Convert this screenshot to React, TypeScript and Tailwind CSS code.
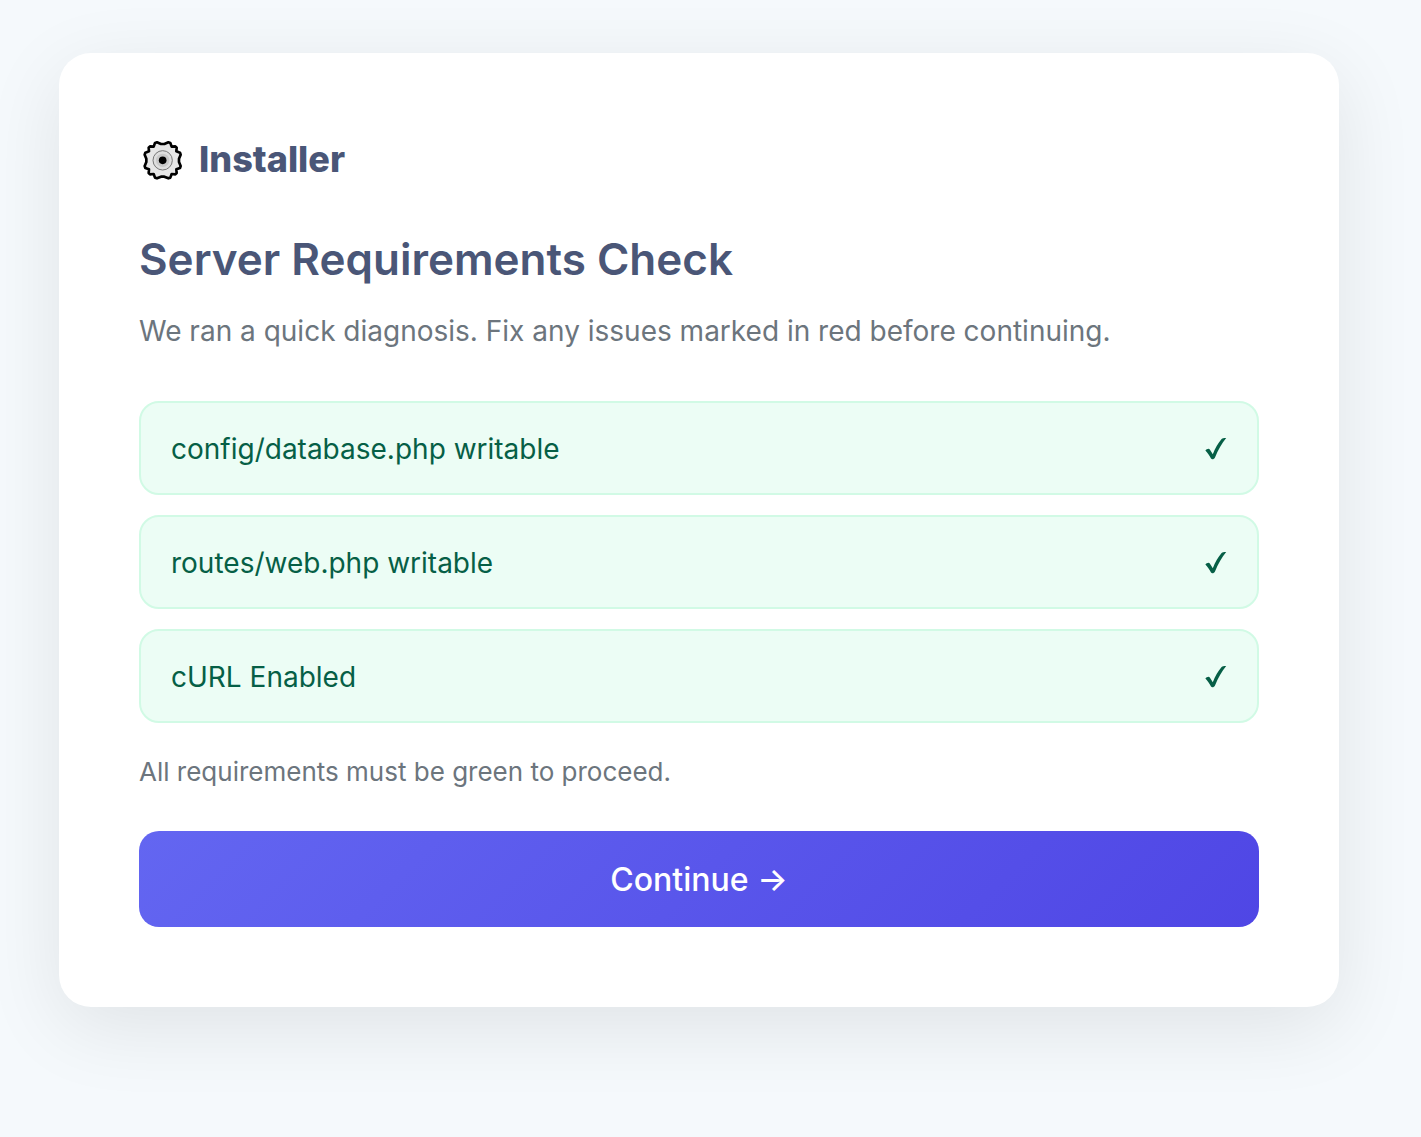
import React from 'react';

interface Requirement {
  label: string;
  passed: boolean;
}

const requirements: Requirement[] = [
  { label: 'config/database.php writable', passed: true },
  { label: 'routes/web.php writable', passed: true },
  { label: 'cURL Enabled', passed: true },
];

const GearIcon: React.FC = () => (
  <svg viewBox="-71 -73 144 144" className="w-12 h-12 shrink-0" aria-hidden="true">
    <path
      d="M-17-54 -5-49 5-49 17-54 23-52 27-41 38-42 42-38 41-27 52-23 54-17 49-5 49 5 54 17 52 23 41 27 42 38 38 42 27 41 23 52 17 54 5 49 -5 49 -17 54 -23 52 -27 41 -38 42 -42 38 -41 27 -52 23 -54 17 -49 5 -49-5 -54-17 -52-23 -41-27 -42-38 -38-42 -27-41 -23-52Z"
      fill="#e6e6e6"
      stroke="#000"
      strokeWidth="8"
      strokeLinejoin="round"
    />
    <circle r="29" fill="#dedede" stroke="#777" strokeWidth="3" />
    <circle r="20" fill="#c8c8c8" />
    <circle r="11.5" fill="#000" />
  </svg>
);

const CheckIcon: React.FC = () => (
  <svg viewBox="0 0 24 28" className="w-6 h-7 shrink-0" role="img" aria-label="Passed">
    <path d="M2.4 15.6C3.4 14.2 5.8 13.2 6.8 14.4L9.8 19.2C12.2 13.4 15.2 8 18.6 4.1C19.6 3 21.6 2.9 23.2 3C18.8 8.4 15 15.2 12 22.4C11.3 24.1 9 24.7 8 23.6C6.6 21 4.8 18.4 2.4 15.6Z" fill="currentColor" />
  </svg>
);

const RequirementRow: React.FC<{ item: Requirement }> = ({ item }) => (
  <li
    className={`flex items-center justify-between rounded-[20px] border-2 px-[30px] pt-[25px] pb-[23px] text-[28px] leading-[42px] ${
      item.passed ? 'bg-[#ecfdf5] border-[#d1fae5] text-[#065f46]' : 'bg-red-50 border-red-100 text-red-800'
    }`}
  >
    <span>{item.label}</span>
    {item.passed ? <CheckIcon /> : <span>✕</span>}
  </li>
);

export default function App() {
  const ready = requirements.every((r) => r.passed);

  return (
    <div className="min-h-screen bg-[#f5f9fc] pt-[53px] pb-16 pl-[59px] pr-[82px] font-['Inter',sans-serif]">
      <main className="w-full rounded-[32px] bg-white p-20 shadow-[0_20px_80px_rgba(0,0,0,0.09)]">
        <div className="flex items-center gap-3 text-[#4a5677]">
          <GearIcon />
          <span className="pb-0.5 text-[36px] leading-[52px] font-extrabold">Installer</span>
        </div>

        <h1 className="mt-[39px] text-[44px] leading-[66px] font-semibold text-[#4a5677]">Server Requirements Check</h1>
        <p className="mt-[17px] text-[28px] leading-[44px] text-[#6c757d]">
          We ran a quick diagnosis. Fix any issues marked in red before continuing.
        </p>

        <ul className="mt-12 flex flex-col gap-5">
          {requirements.map((item) => (
            <RequirementRow key={item.label} item={item} />
          ))}
        </ul>

        <p className="mt-[29px] text-[26px] leading-[40px] text-[#6c757d]">All requirements must be green to proceed.</p>

        <button
          type="button"
          disabled={!ready}
          className="mt-[39px] w-full h-24 rounded-[20px] bg-[linear-gradient(135deg,#6366f1,#4f46e5)] pt-0.5 text-[32px] font-medium text-white"
        >
          Continue →
        </button>
      </main>
    </div>
  );
}
